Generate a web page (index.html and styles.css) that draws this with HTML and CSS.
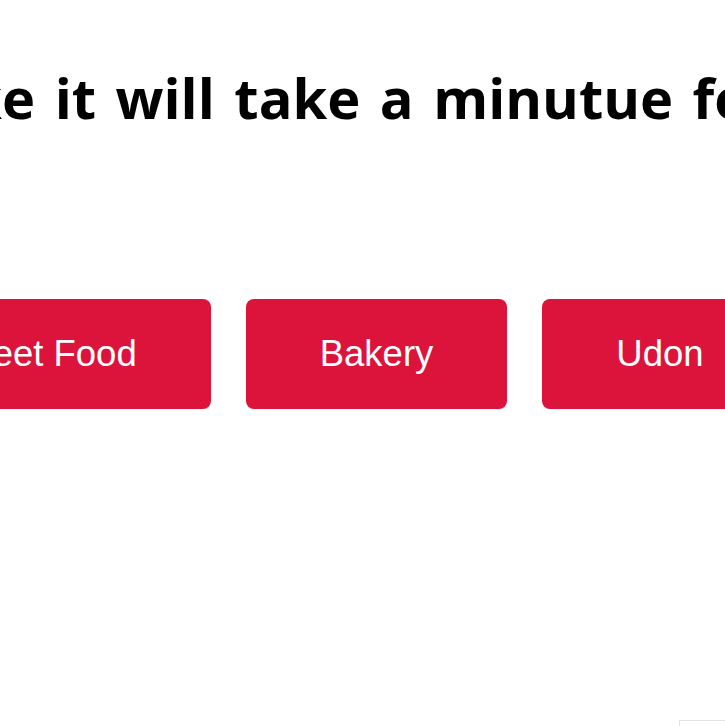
FILE: index.html
```html
<!DOCTYPE html>
<html>
<head>
<meta charset="utf-8">
<link rel="stylesheet" href="styles.css">
</head>
<body>
<main class="page">
  <h1 class="title"><span class="title-text">Looks like it will take a minutue for us</span></h1>
  <div class="choices">
    <button class="choice">Street Food</button>
    <button class="choice">Bakery</button>
    <button class="choice">Udon</button>
  </div>
</main>
<div class="corner-widget"></div>
</body>
</html>
```
FILE: styles.css
```css
html, body {
  margin: 0;
  padding: 0;
  background: #ffffff;
  overflow: hidden;
}
.page {
  width: 725px;
  height: 726px;
  overflow: hidden;
  display: flex;
  flex-direction: column;
}
.title {
  margin: 62px 0 0 0;
  height: 70px;
  display: flex;
  justify-content: flex-start;
  font-family: "Open Sans", sans-serif;
  font-weight: bold;
  font-size: 56px;
  line-height: 70px;
  word-spacing: 5px;
  color: #000;
  white-space: nowrap;
}
.title-text {
  margin-left: -250px;
}
.choices {
  margin-top: 167px;
  margin-left: -128px;
  display: flex;
  gap: 35px;
  justify-content: flex-start;
}
.choice {
  flex: 0 0 auto;
  height: 110px;
  border: none;
  border-radius: 8px;
  background: #dc143c;
  color: #ffffff;
  font-family: "Liberation Sans", Arial, sans-serif;
  font-size: 36.5px;
  padding: 0 74px;
  white-space: nowrap;
}
.corner-widget {
  position: fixed;
  left: 679px;
  top: 720px;
  width: 60px;
  height: 20px;
  border: 1px solid #e3e3e3;
  background: #fff;
}
```
